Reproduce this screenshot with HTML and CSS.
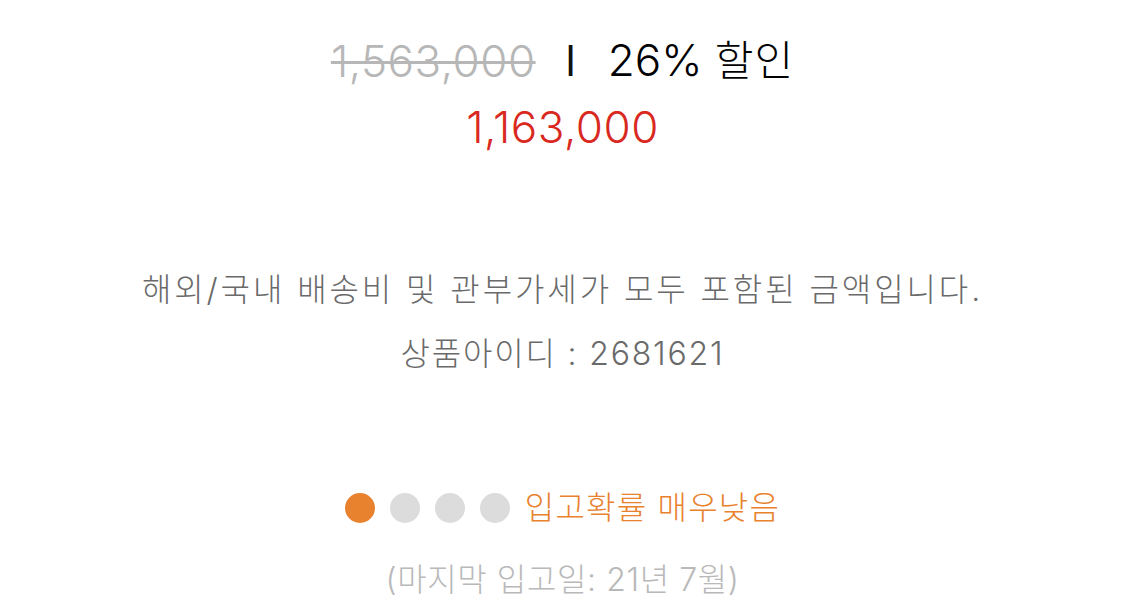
FILE: index.html
```html
<!DOCTYPE html>
<html lang="ko">
<head>
<meta charset="utf-8">
<link rel="stylesheet" href="styles.css">
</head>
<body>
<div class="page">
  <div class="price-row">
    <span class="old-price">1,563,000</span>
    <span class="sep">l</span>
    <span class="discount">26% <span class="ko">할인</span></span>
  </div>
  <div class="new-price">1,163,000</div>
  <p class="note">해외/국내 배송비 및 관부가세가 모두 포함된 금액입니다.</p>
  <p class="pid">상품아이디 : 2681621</p>
  <div class="stock">
    <span class="dot on"></span>
    <span class="dot"></span>
    <span class="dot"></span>
    <span class="dot"></span>
    <span class="stock-label">입고확률 매우낮음</span>
  </div>
  <p class="last">(마지막 입고일: 21년 7월)</p>
</div>
</body>
</html>
```
FILE: styles.css
```css
html, body {
  margin: 0;
  padding: 0;
  background: #fff;
}
.page {
  width: 1125px;
  height: 611px;
  display: flex;
  flex-direction: column;
  align-items: center;
  font-family: "Inter", "Noto Sans CJK KR", sans-serif;
  font-weight: 300;
  overflow: hidden;
}
.price-row {
  margin-top: 33px;
  display: flex;
  align-items: center;
  font-size: 44px;
  line-height: 54px;
}
.old-price {
  color: #b7b7b7;
  letter-spacing: 0.5px;
  text-decoration: line-through;
  text-decoration-thickness: 3px;
}
.sep {
  color: #111;
  font-size: 42px;
  font-weight: 400;
  margin: 0 32px 0 30px;
}
.discount {
  color: #000;
}
.discount .ko {
  font-size: 42px;
  letter-spacing: 1px;
}
.new-price {
  margin-top: 12px;
  color: #d9291f;
  font-size: 44px;
  line-height: 54px;
  letter-spacing: 0.5px;
}
.note {
  margin: 116px 0 0;
  color: #6a6a6a;
  font-size: 32px;
  line-height: 40px;
  letter-spacing: 2.9px;
}
.pid {
  margin: 24px 0 0;
  color: #6a6a6a;
  font-size: 32px;
  line-height: 40px;
  letter-spacing: 1.8px;
}
.stock {
  margin-top: 114px;
  display: flex;
  align-items: center;
  gap: 15px;
}
.dot {
  width: 30px;
  height: 30px;
  border-radius: 50%;
  background: #dcdcdc;
}
.dot.on {
  background: #e8822f;
}
.stock-label {
  color: #e8822f;
  font-size: 32px;
  line-height: 40px;
  letter-spacing: 1.2px;
}
.last {
  margin: 32px 0 0;
  color: #b9b9b9;
  font-size: 32px;
  line-height: 40px;
  letter-spacing: 0.6px;
}
```
